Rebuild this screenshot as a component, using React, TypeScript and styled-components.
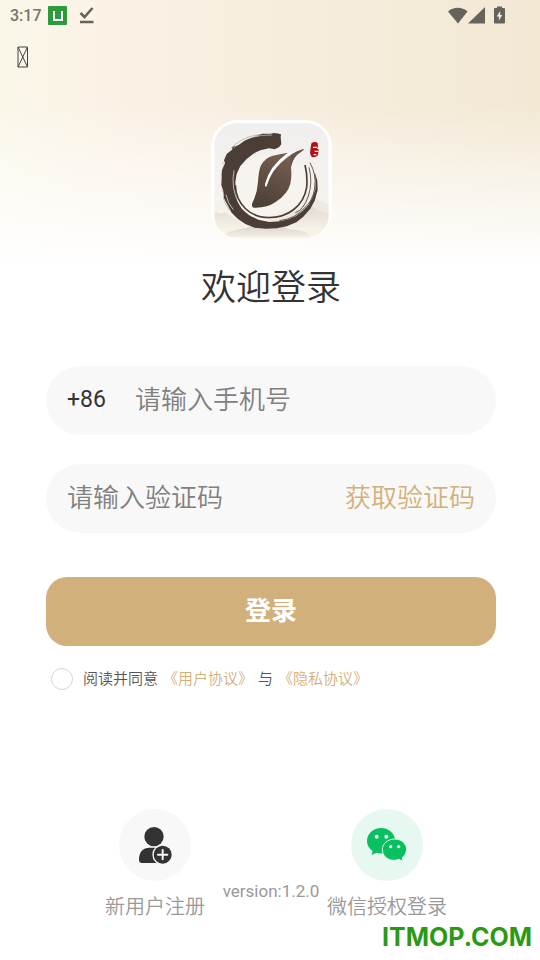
import React, { useState } from "react";
import styled, { createGlobalStyle } from "styled-components";

const GlobalStyle = createGlobalStyle`
  * { box-sizing: border-box; }
  body {
    margin: 0;
    background: #fff;
    color: #333;
    font-family: Roboto, "Noto Sans CJK SC", sans-serif;
  }
  button, input { font: inherit; color: inherit; }
  button { border: 0; padding: 0; background: none; cursor: pointer; }
`;

const Page = styled.div`
  position: relative;
  display: flex;
  flex-direction: column;
  min-height: 100vh;
  background:
    linear-gradient(to bottom, rgba(255, 255, 255, 0) 104px, rgba(255, 255, 255, 0.5) 184px, #fff 268px),
    linear-gradient(to right, #faf7e9 0%, #faf1e5 24%, #f6eddd 55%, #f2e8d4 100%);
`;

const StatusBar = styled.header`
  display: flex;
  align-items: center;
  justify-content: space-between;
  height: 30px;
  padding: 0 35px 0 10px;
  color: #66635c;
`;

const StatusGroup = styled.div<{ $gap: number }>`
  display: flex;
  align-items: center;
  gap: ${(p) => p.$gap}px;
`;

const Clock = styled.time`
  font-size: 16px;
  line-height: 20px;
  padding-top: 1px;
  font-weight: 500;
  color: #77746c;
`;

const NavBar = styled.nav`
  display: flex;
  align-items: center;
  height: 54px;
  padding: 0 17px;
`;

const BackButton = styled.button`
  display: flex;
`;

const Main = styled.main`
  display: flex;
  flex: 1;
  flex-direction: column;
  padding: 36px 44px 0 46px;
`;

const LogoBox = styled.div`
  display: flex;
  justify-content: center;
`;

const Title = styled.h1`
  margin: 26px 0 52px;
  font-size: 35px;
  line-height: 50px;
  font-weight: 350;
  text-align: center;
`;

const Form = styled.form`
  display: flex;
  flex-direction: column;
`;

const Field = styled.div`
  display: flex;
  align-items: center;
  height: 69px;
  margin-bottom: 29px;
  padding: 0 21px 2px;
  border-radius: 35px;
  background: #f8f8f8;
`;

const Prefix = styled.label`
  width: 68px;
  font-size: 23px;
  line-height: 32px;
`;

const TextInput = styled.input`
  flex: 1;
  min-width: 0;
  height: 40px;
  padding: 0;
  border: 0;
  outline: 0;
  background: transparent;
  font-size: 26px;
  font-weight: 350;
  &::placeholder { color: #808080; opacity: 1; }
`;

const CodeButton = styled.button`
  color: #d2b07c;
  font-size: 26px;
  line-height: 40px;
  font-weight: 350;
`;

const SubmitButton = styled.button`
  height: 69px;
  margin-top: 15px;
  padding-bottom: 7px;
  border-radius: 21px;
  background: #d2b07c;
  color: #fff;
  font-size: 26px;
  font-weight: 700;
`;

const Agreement = styled.div`
  display: flex;
  align-items: center;
  gap: 5px;
  margin-top: 21px;
  padding-left: 5px;
  color: #555;
  font-size: 15px;
  line-height: 24px;
  font-weight: 350;
`;

const Tick = styled.input`
  appearance: none;
  width: 22px;
  height: 22px;
  margin: 0 5px 0 0;
  border: 1px solid #d6d6d6;
  border-radius: 50%;
  background: #fff;
  &:checked { background: #d2b07c; border-color: #d2b07c; }
`;

const PolicyLink = styled.a`
  color: #d2b07c;
  text-decoration: none;
`;

const Footer = styled.footer`
  display: flex;
  justify-content: center;
  margin-top: auto;
  padding: 0 40px 38px 42px;
  color: #999;
`;

const FooterAction = styled.button`
  display: flex;
  flex: 0 0 134px;
  flex-direction: column;
  align-items: center;
  gap: 11px;
  font-size: 20px;
  line-height: 30px;
  font-weight: 350;
`;

const IconCircle = styled.span<{ $tone: string }>`
  display: flex;
  width: 72px;
  height: 72px;
  border-radius: 50%;
  background: ${(p) => p.$tone};
`;

const Version = styled.p`
  flex: 0 0 98px;
  margin: 70px 0 0;
  text-align: center;
  white-space: nowrap;
  font-size: 17px;
  line-height: 24px;
`;

const Watermark = styled.span`
  position: absolute;
  right: 8px;
  bottom: 7px;
  color: #2a9a16;
  font-family: Inter, sans-serif;
  font-size: 25px;
  line-height: 32px;
  font-weight: 700;
`;

const AppBadge = () => (
  <svg width="19" height="19" viewBox="0 0 19 19" aria-hidden="true">
    <rect width="19" height="19" rx="1" fill="#2b9b3b" />
    <path d="M6 5v9h8V5" fill="none" stroke="#fff" strokeWidth="2" />
  </svg>
);

const DoneIcon = () => (
  <svg width="15" height="18" viewBox="0 0 15 18" aria-hidden="true">
    <path d="M1.500 7l4 4L13.500 2M1 16h13.500" fill="none" stroke="#66635c" strokeWidth="2.600" />
  </svg>
);

const WifiIcon = () => (
  <svg width="20" height="17" viewBox="0 0 20 17" aria-hidden="true">
    <path d="M0 4.500C5.500-.500 14-.500 19.500 4.500L10 16.500Z" fill="#66635c" />
  </svg>
);

const SignalIcon = () => (
  <svg width="17" height="17" viewBox="0 0 17 17" aria-hidden="true">
    <path d="M17 0V16.500H0Z" fill="#66635c" />
  </svg>
);

const BatteryIcon = () => (
  <svg width="11" height="18" viewBox="0 0 11 18" aria-hidden="true">
    <path d="M3 2V.500h5V2h2q1 0 1 1v13.500q0 1-1 1H1q-1 0-1-1V3q0-1 1-1Z" fill="#66635c" />
    <path d="M6.200 5L2.700 10.500h2.200V14.500L8.300 9H6.200Z" fill="#f5edde" />
  </svg>
);

const GlyphBox = () => (
  <svg width="12" height="22" viewBox="0 0 12 22" aria-hidden="true">
    <path d="M1 1h9.500v20H1ZL10.500 21M10.500 1L1 21" fill="none" stroke="#444" strokeWidth="1" />
  </svg>
);

const Logo = () => (
  <svg width="121" height="118" viewBox="33 30 363 354" role="img" aria-label="logo">
    <defs>
      <linearGradient id="paper" x1="0" y1="0" x2="0" y2="1">
        <stop offset="0" stopColor="#f0efef" />
        <stop offset="0.550" stopColor="#f5f2ee" />
        <stop offset="1" stopColor="#f8f3e6" />
      </linearGradient>
      <linearGradient id="leaf" x1="0.700" y1="0" x2="0.300" y2="1">
        <stop offset="0" stopColor="#7b6252" />
        <stop offset="1" stopColor="#4d4038" />
      </linearGradient>
      <linearGradient id="hill" x1="0" y1="0" x2="0" y2="1">
        <stop offset="0" stopColor="#d9d5cd" />
        <stop offset="1" stopColor="#f6f1e5" />
      </linearGradient>
      <clipPath id="tile"><rect x="43" y="39" width="343" height="344" rx="67" /></clipPath>
    </defs>
    <rect x="33" y="30" width="363" height="354" rx="80" fill="#fff" />
    <g clipPath="url(#tile)">
      <rect x="43" y="39" width="343" height="344" fill="url(#paper)" />
      <path d="M250 310L290 282 312 262 326 244 340 251 358 272 386 282V350H240Z" fill="#eeeae3" />
      <path d="M210 315L240 304 252 297 270 307 295 303 316 293 334 287 350 300 386 312V348H200Z" fill="url(#hill)" opacity="0.800" />
      <path d="M43 304L62 311 78 307 100 325 126 334V354H43Z" fill="url(#hill)" opacity="0.600" />
      <path d="M85 366L120 357 149 351 165 346 190 354 214 350 244 347 265 357 300 361 320 368 330 383H70Z" fill="url(#hill)" />
      <ellipse cx="211" cy="232" rx="112" ry="96" fill="#f8f5ef" opacity="0.700" />
    </g>
    <path
      d="M243 73L222 69 210 73 188 71 160 80 135 91 116 105 98 110 96 119 80 132 72 151 75 160 66 181 65 201 64 226 70 243 72 265 83 286 95 308 113 326 136 342 164 353 198 356 230 355 260 349 289 337 310 320 331 296 344 272 353 240 352 212 344 186 347 215 346 238 338 262 326 284 308 303 288 318 266 328 240 334 208 336 175 329 148 316 126 297 112 273 107 244 106 215 110 192 121 168 140 147 160 131 181 121 207 115 224 118 237 112 244 103 242 82Z"
      fill="#4b3e36"
    />
    <path d="M106 226C108 284 152 323 207 323S310 290 320 232Q323 196 315 165" fill="none" stroke="#4b3e36" strokeWidth="5" />
    <path d="M330 158Q350 194 344 234T315 292Q286 327 238 332M327 172Q339 216 325 258T286 308" fill="none" stroke="#4b3e36" strokeWidth="2.500" />
    <path d="M102 181Q91 237 119 284T207 328Q258 325 288 302M78 254Q83 280 100 299" fill="none" stroke="#f7f3ee" strokeWidth="2" />
    <path d="M69 259Q75 288 97 309M64 198Q65 180 73 163M92 116Q122 84 166 76T238 71M66 240L70 247M75 153L82 138M70 157L67 163" fill="none" stroke="#5d5149" strokeWidth="1" />
    <path d="M101 114Q136 82 178 77M150 83Q178 75 216 75" fill="none" stroke="#eeece8" strokeWidth="1.500" />
    <path
      d="M264 128Q238 132 216 138Q194 145 183 166Q176 181 174 216Q172 250 157 279Q153 290 161 293Q199 295 227 276Q264 251 271 221Q276 199 273 173Q276 151 291 134L311 120 309 117Q289 124 277 131Q240 156 218 187Q204 208 197 230Q194 227 199 213Q216 170 264 128Z"
      fill="url(#leaf)"
    />
    <path d="M280 127Q262 137 251 146Q217 175 199 230Q193 230 196 220Q208 169 260 131Q270 125 280 127Z" fill="#fff" />
    <path d="M313 118Q291 122 275 134Q267 141 272 171Q278 147 291 134Z" fill="#6a5447" />
    <path d="M335 98Q347 93 353 99L354 110 351 115 356 119 354 136 345 142 335 141 330 130 333 106Z" fill="#b80c13" />
    <path d="M339 112h12M344 124h11M341 134l8 0" fill="none" stroke="#fff" strokeWidth="4" />
  </svg>
);

const AddUserIcon = () => (
  <svg width="72" height="72" viewBox="87 42 216 216" aria-hidden="true">
    <circle cx="192" cy="125" r="29" fill="#333" />
    <path d="M147 193Q148 158 179 158H210L217 204H156Q146 204 147 193Z" fill="#333" />
    <circle cx="218" cy="179" r="31" fill="#f8f8f8" />
    <circle cx="218" cy="179" r="27" fill="#333" />
    <path d="M218 165v28M204 179h28" stroke="#f8f8f8" strokeWidth="6" strokeLinecap="round" />
  </svg>
);

const WeChatIcon = () => (
  <svg width="72" height="72" viewBox="123 42 216 216" aria-hidden="true">
    <path d="M214 99C190 99 171 116 171 138Q171 156 188 168L185 180 200 173Q211 177 223 174L256 136C253 113 235 99 214 99Z" fill="#07c160" />
    <path d="M254 132C274 132 290 146 290 164Q290 178 277 188L279 199 266 193Q260 196 252 196C232 196 217 182 217 164S234 132 254 132Z" fill="#07c160" stroke="#e6f8ef" strokeWidth="3" />
    <circle cx="200" cy="125" r="6" fill="#e6f8ef" />
    <circle cx="229" cy="125" r="6" fill="#e6f8ef" />
    <circle cx="242" cy="155" r="5" fill="#e6f8ef" />
    <circle cx="266" cy="155" r="5" fill="#e6f8ef" />
  </svg>
);

export default function App() {
  const [agreed, setAgreed] = useState(false);
  return (
    <>
      <GlobalStyle />
      <Page>
        <StatusBar>
          <StatusGroup $gap={12}>
            <StatusGroup $gap={6}>
              <Clock>3:17</Clock>
              <AppBadge />
            </StatusGroup>
            <DoneIcon />
          </StatusGroup>
          <StatusGroup $gap={9}>
            <StatusGroup $gap={0}>
              <WifiIcon />
              <SignalIcon />
            </StatusGroup>
            <BatteryIcon />
          </StatusGroup>
        </StatusBar>
        <NavBar>
          <BackButton type="button" aria-label="返回"><GlyphBox /></BackButton>
        </NavBar>
        <Main>
          <LogoBox><Logo /></LogoBox>
          <Title>欢迎登录</Title>
          <Form onSubmit={(e) => e.preventDefault()}>
            <Field>
              <Prefix htmlFor="phone">+86</Prefix>
              <TextInput id="phone" type="tel" placeholder="请输入手机号" />
            </Field>
            <Field>
              <TextInput id="code" aria-label="验证码" placeholder="请输入验证码" />
              <CodeButton type="button">获取验证码</CodeButton>
            </Field>
            <SubmitButton type="submit">登录</SubmitButton>
            <Agreement>
              <Tick id="agree" type="checkbox" checked={agreed} onChange={(e) => setAgreed(e.target.checked)} />
              <label htmlFor="agree">阅读并同意</label>
              <PolicyLink href="#terms">《用户协议》</PolicyLink>
              <span>与</span>
              <PolicyLink href="#privacy">《隐私协议》</PolicyLink>
            </Agreement>
          </Form>
        </Main>
        <Footer>
          <FooterAction type="button">
            <IconCircle $tone="#f8f8f8"><AddUserIcon /></IconCircle>
            新用户注册
          </FooterAction>
          <Version>version:1.2.0</Version>
          <FooterAction type="button">
            <IconCircle $tone="#e6f8ef"><WeChatIcon /></IconCircle>
            微信授权登录
          </FooterAction>
        </Footer>
        <Watermark>ITMOP.COM</Watermark>
      </Page>
    </>
  );
}
